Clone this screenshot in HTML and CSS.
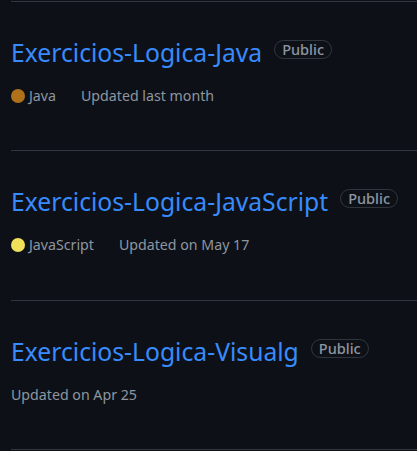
FILE: index.html
```html
<!DOCTYPE html>
<html>
<head>
<meta charset="utf-8">
<link rel="stylesheet" href="styles.css">
</head>
<body>
<ul class="repo-list">
  <li class="repo">
    <div class="repo-head">
      <a class="repo-name" href="#">Exercicios-Logica-Java</a>
      <span class="badge">Public</span>
    </div>
    <div class="repo-meta">
      <span class="lang"><span class="dot dot-java"></span>Java</span>
      <span class="updated">Updated last month</span>
    </div>
  </li>
  <li class="repo">
    <div class="repo-head">
      <a class="repo-name" href="#">Exercicios-Logica-JavaScript</a>
      <span class="badge">Public</span>
    </div>
    <div class="repo-meta">
      <span class="lang"><span class="dot dot-js"></span>JavaScript</span>
      <span class="updated">Updated on May 17</span>
    </div>
  </li>
  <li class="repo">
    <div class="repo-head">
      <a class="repo-name" href="#">Exercicios-Logica-Visualg</a>
      <span class="badge">Public</span>
    </div>
    <div class="repo-meta">
      <span class="updated">Updated on Apr 25</span>
    </div>
  </li>
</ul>
</body>
</html>
```

FILE: styles.css
```css
html, body {
  margin: 0;
  padding: 0;
  background: #0d1117;
}
body {
  font-family: "Noto Sans", "Liberation Sans", sans-serif;
  padding-top: 1px;
  padding-left: 11px;
}
.repo-list {
  list-style: none;
  margin: 0;
  padding: 0;
  border-bottom: 1px solid #30363d;
}
.repo {
  border-top: 1px solid #30363d;
  height: 148.4px;
}
.repo-head {
  display: flex;
  align-items: flex-start;
  gap: 12px;
  padding-top: 36px;
  height: 30px;
}
.repo-name {
  color: #388bfd;
  text-decoration: none;
  font-size: 24.7px;
  line-height: 30px;
}
.badge {
  margin-top: 2px;
  border: 1px solid #30363d;
  border-radius: 999px;
  color: #8d96a0;
  font-size: 14.5px;
  font-weight: 500;
  padding: 0 7px;
  line-height: 17px;
}
.repo-meta {
  display: flex;
  align-items: center;
  margin-top: 18px;
  font-size: 14.2px;
  line-height: 20px;
  color: #8d96a0;
}
.lang {
  display: flex;
  align-items: center;
  margin-right: 25px;
}
.dot {
  width: 14px;
  height: 14px;
  border-radius: 50%;
  margin-right: 4px;
}
.dot-java { background: #b07219; }
.dot-js { background: #f1e05a; }
```
